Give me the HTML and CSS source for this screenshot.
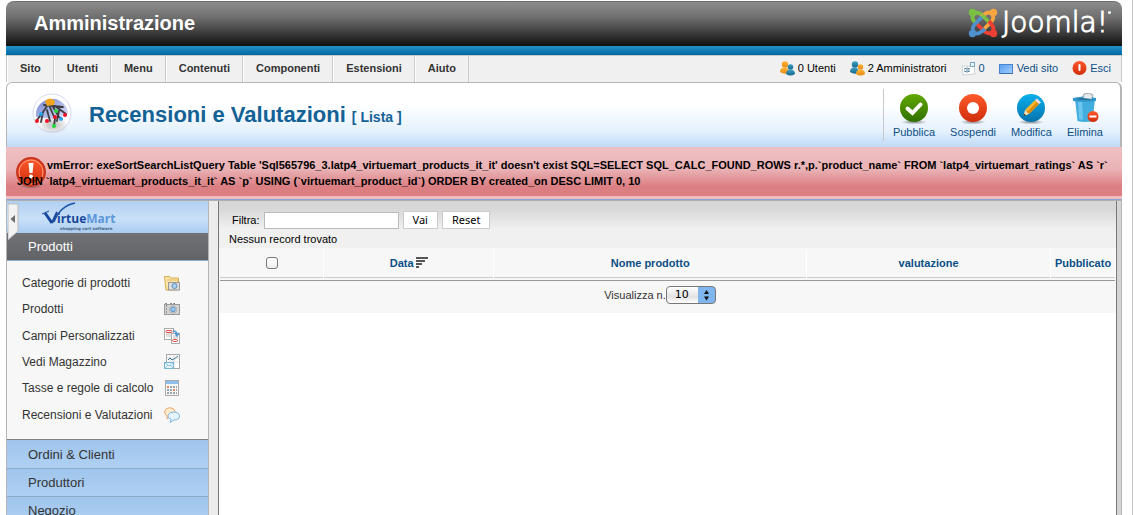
FILE: index.html
```html
<!DOCTYPE html>
<html lang="it">
<head>
<meta charset="utf-8">
<title>Amministrazione - Recensioni e Valutazioni</title>
<link rel="stylesheet" href="styles.css">
</head>
<body>
<svg class="defs" aria-hidden="true">
  <defs>
    <linearGradient id="green" x1="0" y1="0" x2="0" y2="1"><stop offset="0" stop-color="#62a800"/><stop offset="1" stop-color="#2f6f00"/></linearGradient>
    <linearGradient id="red" x1="0" y1="0" x2="0" y2="1"><stop offset="0" stop-color="#ff5a2c"/><stop offset="1" stop-color="#cf2d0c"/></linearGradient>
    <linearGradient id="blue" x1="0" y1="0" x2="0" y2="1"><stop offset="0" stop-color="#08b0ec"/><stop offset="1" stop-color="#0672ae"/></linearGradient>
    <linearGradient id="orange" x1="0" y1="0" x2="0" y2="1"><stop offset="0" stop-color="#ffb53a"/><stop offset="1" stop-color="#e88a10"/></linearGradient>
    <linearGradient id="teal" x1="0" y1="0" x2="0" y2="1"><stop offset="0" stop-color="#3f9fc4"/><stop offset="1" stop-color="#15688f"/></linearGradient>
    <linearGradient id="sky" x1="0" y1="0" x2="1" y2="1"><stop offset="0" stop-color="#5d9ef0"/><stop offset="1" stop-color="#9fd0ff"/></linearGradient>
    <linearGradient id="dome" x1="0" y1="0" x2="1" y2="1"><stop offset="0" stop-color="#6f7fcc"/><stop offset="1" stop-color="#e4e9fa"/></linearGradient>
    <radialGradient id="halo"><stop offset="0.3" stop-color="#555" stop-opacity=".5"/><stop offset="1" stop-color="#555" stop-opacity="0"/></radialGradient>
  </defs>
</svg>
<div class="page">
  <header class="top">
    <h1 class="site-title">Amministrazione</h1>
    <div class="joomla">
      <svg width="30" height="30" viewBox="0 0 30 30" fill="none" stroke-linejoin="round" aria-hidden="true">
        <g stroke-width="3.800">
          <path d="M9 17L6 13Q3 9 6 6Q10 3 14 7L21 14" stroke="#7ac143"/>
          <path d="M9 17L6 13Q3 9 6 6Q10 3 14 7L21 14" stroke="#f9a541" transform="rotate(90 15 15)"/>
          <path d="M9 17L6 13Q3 9 6 6Q10 3 14 7L21 14" stroke="#ee4035" transform="rotate(180 15 15)"/>
          <path d="M9 17L6 13Q3 9 6 6Q10 3 14 7L21 14" stroke="#4f91cd" transform="rotate(270 15 15)"/>
          <path d="M14 7L17 10" stroke="#7ac143"/>
        </g>
        <circle cx="4.500" cy="4.500" r="3.700" fill="#7ac143"/>
        <circle cx="25.500" cy="4.500" r="3.700" fill="#f9a541"/>
        <circle cx="25.500" cy="25.500" r="3.700" fill="#ee4035"/>
        <circle cx="4.500" cy="25.500" r="3.700" fill="#4f91cd"/>
      </svg>
      <span class="wordmark">Joomla!<span class="dot"></span></span>
    </div>
  </header>
  <div class="stripe"></div>

  <div class="bar">
    <nav class="menu">
      <a href="#">Sito</a><a href="#">Utenti</a><a href="#">Menu</a><a href="#">Contenuti</a><a href="#">Componenti</a><a href="#">Estensioni</a><a href="#">Aiuto</a>
    </nav>
    <div class="status">
      <span class="stat">
        <svg width="15" height="15" viewBox="0 0 15 15" aria-hidden="true"><g fill="url(#orange)"><circle cx="5" cy="3.500" r="3.200"/><path d="M0 11 Q0 6 5 6.500 Q9 7 9 12 Q4 14 0 11Z"/></g><g fill="url(#teal)"><circle cx="10.500" cy="6" r="2.800"/><path d="M6 13 Q6 8.500 10.500 8.500 Q15 8.500 15 13 Q10.500 16 6 13Z"/></g></svg>
        0 Utenti</span>
      <span class="stat">
        <svg width="15" height="15" viewBox="0 0 15 15" aria-hidden="true"><g fill="url(#teal)"><circle cx="5" cy="3.500" r="3.200"/><path d="M0 11 Q0 6 5 6.500 Q9 7 9 12 Q4 14 0 11Z"/></g><g fill="url(#orange)"><circle cx="10.500" cy="6" r="2.800"/><path d="M6 13 Q6 8.500 10.500 8.500 Q15 8.500 15 13 Q10.500 16 6 13Z"/></g></svg>
        2 Amministratori</span>
      <a class="stat" href="#">
        <svg width="15" height="15" viewBox="0 0 15 15" aria-hidden="true"><path d="M1 5h9l3 0 1 8-12 1z" fill="#fdfdfd" stroke="#ccd2d6"/><path d="M3 8q3-2 6 0M3 10q3 2 6 0M5 9h3" stroke="#55809f" fill="none"/><rect x="9.500" y="1.500" width="4" height="4" fill="#e8f3fb" stroke="#7ba5c4"/></svg>
        0</a>
      <a class="stat" href="#">
        <svg width="15" height="15" viewBox="0 0 15 15" aria-hidden="true"><rect x=".5" y="3.500" width="13" height="9" fill="url(#sky)" stroke="#4a84cc"/><path d="M1 12.500h13" stroke="#3c6ea8"/></svg>
        Vedi sito</a>
      <a class="stat" href="#">
        <svg width="15" height="15" viewBox="0 0 15 15" aria-hidden="true"><circle cx="7.500" cy="7" r="7" fill="url(#red)"/><rect x="6.500" y="3" width="2" height="7" rx="1" fill="#fff"/></svg>
        Esci</a>
    </div>
  </div>

  <section class="title-panel">
    <svg class="title-icon" width="48" height="48" viewBox="0 0 48 48" aria-hidden="true">
      <circle cx="23" cy="22" r="19" fill="#fff" stroke="#d4daf0" stroke-width="1"/>
      <path d="M7 26A16 16 0 0 1 39 22L28 28Z" fill="url(#dome)"/>
      <ellipse cx="24" cy="34" rx="15" ry="9" fill="url(#halo)" opacity=".6"/>
      <path d="M15 14 34 16M20 12 14 21 12 31M14 21 8 29M18 19 21 30M20 14 26 28 25 35M24 16 30 26 33 28M26 15 37 23M30 20 28 30" fill="none" stroke="#3c3c42" stroke-width="1.800" stroke-linecap="round"/>
      <path d="M16 10q5-5 10 0l-1 4-7 1z" fill="#f2a51c"/>
      <g fill="#f01228"><circle cx="8" cy="30" r="2"/><circle cx="18" cy="30" r="2"/><circle cx="26" cy="26" r="2"/><circle cx="36" cy="24" r="2"/></g>
      <g fill="#24d63a"><circle cx="27" cy="20" r="2"/><circle cx="25" cy="35" r="2"/></g>
      <g fill="#27a5f0"><circle cx="12" cy="23" r="2"/><circle cx="32" cy="28" r="2"/></g>
    </svg>
    <h2 class="title">Recensioni e Valutazioni <small>[ Lista ]</small></h2>
    <div class="toolbar">
      <a href="#">
        <svg width="32" height="32" viewBox="0 0 32 32" aria-hidden="true"><ellipse cx="16" cy="29" rx="13" ry="2.500" fill="url(#halo)"/><circle cx="16" cy="15" r="14" fill="url(#green)"/><path d="M9.500 15.500l5 4.500 8-8.500" fill="none" stroke="#fff" stroke-width="4" stroke-linecap="round"/></svg>
        Pubblica</a>
      <a href="#">
        <svg width="32" height="32" viewBox="0 0 32 32" aria-hidden="true"><ellipse cx="16" cy="29" rx="13" ry="2.500" fill="url(#halo)"/><circle cx="16" cy="15" r="14" fill="url(#red)"/><circle cx="16" cy="15" r="6" fill="#fff"/></svg>
        Sospendi</a>
      <a href="#">
        <svg width="32" height="32" viewBox="0 0 32 32" aria-hidden="true"><ellipse cx="16" cy="29" rx="13" ry="2.500" fill="url(#halo)"/><circle cx="16" cy="15" r="14" fill="url(#blue)"/><path d="M10 17L20 7l4 4-10 10z" fill="#f8b62c"/><path d="M12 19L22 9l2 2-10 10z" fill="#d98a10"/><path d="M20 7l2-1.500 4 4L24 11z" fill="#f3dfe0"/><path d="M10 17l4 4-5.500 2z" fill="#f7dfae"/><path d="M9.200 20.800l1.700 1.500L8.500 23z" fill="#222"/></svg>
        Modifica</a>
      <a href="#">
        <svg width="32" height="32" viewBox="0 0 32 32" aria-hidden="true"><path d="M6 6h20l-2.500 22q-7.500 2-15 0z" fill="#42aee0"/><path d="M9 8h4l1 19-4-1z" fill="#6cc6ee"/><path d="M13 5l2-4 5-1 4 2-1 4z" fill="#dfe3e6" stroke="#9ba5ab"/><path d="M4 5q12-3 23 0v3q-11 2-23 0z" fill="#3298cb"/><path d="M7 6q9-2 18 0-9 2-18 0z" fill="#226b92"/><path d="M14 5l3-3 5 1 1 3z" fill="#e9ecee"/><circle cx="24" cy="23.500" r="5.500" fill="url(#red)"/><rect x="20.500" y="22.500" width="7" height="2" fill="#fff"/></svg>
        Elimina</a>
    </div>
  </section>

  <div class="error" role="alert">
    <svg class="error-icon" width="32" height="34" viewBox="0 0 32 34" aria-hidden="true"><ellipse cx="16" cy="30" rx="12" ry="3" fill="url(#halo)"/><circle cx="16" cy="16" r="14" fill="url(#red)" stroke="#c9361f" stroke-width="2"/><circle cx="16" cy="16" r="12" fill="none" stroke="#ff9c80" stroke-width="1"/><path d="M13.500 7h5l-1 10h-3z" fill="#fff"/><circle cx="16" cy="20.500" r="2" fill="#fff"/></svg>
    <p>vmError: exeSortSearchListQuery Table 'Sql565796_3.latp4_virtuemart_products_it_it' doesn't exist SQL=SELECT SQL_CALC_FOUND_ROWS r.*,p.`product_name` FROM `latp4_virtuemart_ratings` AS `r` JOIN `latp4_virtuemart_products_it_it` AS `p` USING (`virtuemart_product_id`) ORDER BY created_on DESC LIMIT 0, 10</p>
  </div>

  <div class="body">
    <aside class="side">
      <div class="brand">
        <svg width="90" height="30" viewBox="0 0 90 30" role="img" aria-label="VirtueMart">
          <path d="M14 20Q20 4 35 1" fill="none" stroke="#1a55a5" stroke-width="1.500"/>
          <path d="M5 11L12 21" stroke="#17479c" stroke-width="3"/>
          <path d="M2 12L9 9" stroke="#17479c" stroke-width="1"/>
          <path d="M12 21L17 10" stroke="#17479c" stroke-width="2"/>
          <text x="17" y="21" class="vm-name">irtue<tspan class="vm-light">Mart</tspan></text>
          <text x="20" y="28" class="vm-tag">shopping cart software</text>
        </svg>
        <button class="collapse" type="button" aria-label="Chiudi menu">
          <svg width="11" height="38" viewBox="0 0 11 38" aria-hidden="true"><path d="M0 1H10V28L0 37Z" fill="#f2f2f2" stroke="#bbb"/><path d="M7 12L2.500 16L7 20Z" fill="#6c6c6c"/></svg>
        </button>
      </div>
      <h3 class="section open">Prodotti</h3>
      <ul class="links">
        <li><a href="#">Categorie di prodotti <svg width="16" height="16" viewBox="0 0 16 16" aria-hidden="true"><path d="M.5 1.500h5l1 1.500h8v4H13v8H2z" fill="#fbe4a6" stroke="#d9ac52"/><path d="M3 5h11" stroke="#e2b965"/><rect x="4.500" y="7.500" width="11" height="7.500" fill="#ddd" stroke="#999"/><circle cx="10.500" cy="11" r="2.500" fill="#a8d2f8" stroke="#668cb0"/></svg></a></li>
        <li><a href="#">Prodotti <svg width="16" height="16" viewBox="0 0 16 16" aria-hidden="true"><rect x=".5" y="3.500" width="15" height="10" fill="#d5d5d5" stroke="#9a9a9a"/><path d="M1 2.500h3M6 2.500h6M2.500 4v9" stroke="#8d8d8d" stroke-dasharray="2 1"/><circle cx="9" cy="8.500" r="3.700" fill="#eee" stroke="#aaa"/><circle cx="9" cy="8.500" r="2.300" fill="#9bc8f2" stroke="#5d8dc0"/></svg></a></li>
        <li><a href="#">Campi Personalizzati <svg width="16" height="16" viewBox="0 0 16 16" aria-hidden="true"><rect x=".5" y=".5" width="9" height="11" fill="#fff" stroke="#aaa"/><rect x="7.500" y="5.500" width="8" height="10" fill="#fff" stroke="#aaa"/><path d="M2 6h6M2 8h6M9 8h5M9 10h5" stroke="#bbb"/><g fill="#fff" stroke="#e34b4b"><rect x="2" y="2.500" width="6" height="2" rx="1"/><rect x="8.500" y="11.500" width="5" height="2" rx="1"/></g><path d="M9 3q4 0 4 4M11 5l2 3 2-3" fill="none" stroke="#5599cf" stroke-width="1.500"/></svg></a></li>
        <li><a href="#">Vedi Magazzino <svg width="16" height="16" viewBox="0 0 16 16" aria-hidden="true"><rect x="2.500" y=".5" width="13" height="14" fill="#fff" stroke="#aaa"/><path d="M6 1v13M10 1v13M3 4h12M3 8h12" stroke="#ddd"/><path d="M4 6l2-2 2 2 2-1 4-3" fill="none" stroke="#437394"/><rect x=".5" y="8.500" width="9" height="6" fill="#e9f6ff" stroke="#78b5db"/><path d="M1 9l4 3 4-3M1 14l3-3M9 14l-3-3" fill="none" stroke="#8fc5e5"/></svg></a></li>
        <li><a href="#">Tasse e regole di calcolo <svg width="16" height="16" viewBox="0 0 16 16" aria-hidden="true"><rect x="1.500" y=".5" width="13" height="15" fill="#f8f8f8" stroke="#aaa"/><rect x="2" y="1" width="12" height="3" fill="#8fbdec"/><path d="M3 7h10M3 10h10M3 13h10" stroke="#9aa4ad" stroke-width="2" stroke-dasharray="2 1"/><path d="M3 7h2M9 10h2" stroke="#e98859" stroke-width="2"/></svg></a></li>
        <li><a href="#">Recensioni e Valutazioni <svg width="16" height="16" viewBox="0 0 16 16" aria-hidden="true"><path d="M3 12l0-3Q0 7 .8 4Q2 .6 6 .7Q10.500 1 11 4.500Q11 9 5.500 9.500Z" fill="#ffeccb" stroke="#eaa56e"/><path d="M6 15.500l1-3Q3 11 4 8Q5.500 5 9.500 5Q15 5 15.500 9Q15.500 13 10 13Z" fill="#e4f3ff" stroke="#7eb4dd"/></svg></a></li>
      </ul>
      <h3 class="section first">Ordini &amp; Clienti</h3>
      <h3 class="section">Produttori</h3>
      <h3 class="section">Negozio</h3>
    </aside>
    <main class="content">
      <form class="filter">
        <label for="filter">Filtra:</label>
        <input id="filter" type="text">
        <button type="button">Vai</button>
        <button type="button">Reset</button>
      </form>
      <p class="empty">Nessun record trovato</p>
      <table class="list">
        <thead>
          <tr>
            <th class="c-check"><input type="checkbox" aria-label="Seleziona tutto"></th>
            <th class="c-date"><a href="#">Data<svg width="12" height="11" viewBox="0 0 12 11" aria-hidden="true"><path d="M0 1h12M0 4h9M0 7h6M0 10h3" stroke="#555" stroke-width="2"/></svg></a></th>
            <th class="c-name"><a href="#">Nome prodotto</a></th>
            <th class="c-rate"><a href="#">valutazione</a></th>
            <th class="c-pub"><a href="#">Pubblicato</a></th>
          </tr>
        </thead>
        <tfoot>
          <tr>
            <td colspan="5">
              <div class="pager">
                <label for="limit">Visualizza n.</label>
                <span class="select">
                  <select id="limit"><option>10</option><option>20</option></select>
                  <svg width="17" height="16" viewBox="0 0 17 16" aria-hidden="true"><path d="M8.500 3L11 7H6ZM6 9.500H11L8.500 13.500Z" fill="#111"/></svg>
                </span>
              </div>
            </td>
          </tr>
        </tfoot>
      </table>
    </main>
  </div>
</div>
</body>
</html>
```
FILE: styles.css
```css
* { box-sizing: border-box; }

body {
  margin: 0;
  padding: 1px 10px 0 6px;
  height: 100vh;
  overflow: hidden;
  border-right: 1px solid #c4c4c4;
  background: #fff;
  color: #000;
  font: 11px/16px "Liberation Sans", Arial, sans-serif;
}

h1, h2, h3, p, ul { margin: 0; padding: 0; }
ul { list-style: none; }
a { color: #0b4f86; text-decoration: none; }
svg { display: block; flex: none; }
.defs { position: absolute; width: 0; height: 0; }

.page {
  display: flex;
  flex-direction: column;
  height: 100%;
}

/* Header */
.top {
  display: flex;
  align-items: center;
  justify-content: space-between;
  flex: none;
  height: 45px;
  padding: 0 11px 2px 28px;
  border-top: 1px solid #6d6d6d;
  border-radius: 8px 8px 0 0;
  background: linear-gradient(#8c8c8c, #6f6f6f 35%, #101010);
}
.site-title {
  color: #fff;
  font-size: 20px;
  line-height: 24px;
}
.joomla { display: flex; align-items: center; gap: 4px; }
.wordmark {
  display: flex;
  color: #fff;
  font: 200 28px/32px "DejaVu Sans", sans-serif;
  -webkit-text-stroke: 1px #fff;
}
.dot {
  width: 3px;
  height: 3px;
  margin-top: 4px;
  border-radius: 50%;
  background: #fff;
}
.stripe {
  flex: none;
  height: 9px;
  background: linear-gradient(#2590c9, #0069a3);
}

/* Menu bar */
.bar {
  display: flex;
  justify-content: space-between;
  flex: none;
  height: 27px;
  border: solid #c8c8c8;
  border-width: 1px 1px 0;
  background: #f0f0f0;
}
.menu { display: flex; }
.menu a {
  padding: 4px 12px 0 13px;
  border-right: 1px solid #ccc;
  box-shadow: inset 1px 0 #fff;
  color: #333;
  font-weight: bold;
}
.status {
  display: flex;
  align-items: center;
  gap: 14px;
  padding: 0 10px 2px 0;
}
.stat { display: flex; align-items: center; gap: 3px; }

/* Title and toolbar */
.title-panel {
  display: flex;
  align-items: center;
  flex: none;
  height: 65px;
  padding: 0 17px 0 22px;
  border: solid #b5b5b5;
  border-width: 1px 2px 0 1px;
  border-radius: 6px 6px 0 0;
  background: linear-gradient(#fff 35%, #e5f1fd 75%, #bfdaf7);
}
.title {
  flex: 1;
  padding: 2px 0 0 12px;
  color: #146295;
  font-size: 22px;
  line-height: 28px;
}
.title small { font-size: 14px; }
.toolbar {
  display: flex;
  gap: 15px;
  padding-left: 9px;
  border-left: 1px solid #c5c9cd;
}
.toolbar a {
  display: flex;
  flex-direction: column;
  align-items: center;
  height: 52px;
  padding-top: 4px;
  line-height: 14px;
}

/* Error message */
.error {
  display: flex;
  position: relative;
  flex: none;
  padding: 10px 8px 7px 11px;
  border-bottom: 3px solid #f0bcc0;
  background: linear-gradient(#efc0c3, #eab3b6 45%, #db7f83 80%);
  font-weight: bold;
}
.error p { position: relative; text-indent: 30px; }
.error-icon { position: absolute; left: 9px; top: 9px; }

/* Columns */
.body {
  display: flex;
  flex: 1;
  min-height: 0;
  border: solid #b5b5b5;
  border-width: 1px 1px 0;
  border-top-color: #84a7de;
  box-shadow: inset 0 1px #b0b0b0;
}
.side {
  flex: none;
  width: 202px;
  margin-top: 1px;
  border-right: 1px solid #b5b5b5;
  background: #f7f7f7;
}
.brand {
  position: relative;
  height: 32px;
  padding: 1px 0 0 33px;
  background: linear-gradient(#b2d0f1, #c9e0f8 55%, #aacdf1);
}
.collapse {
  position: absolute;
  left: 1px;
  top: 2px;
  padding: 0;
  border: 0;
  background: none;
}
.vm-name { fill: #17479c; font: bold 12px "Open Sans", sans-serif; }
.vm-light { fill: #5b97d8; }
.vm-tag { fill: #47637f; font: bold 4px "DejaVu Sans", sans-serif; }

.section {
  height: 28px;
  padding-left: 21px;
  border-bottom: 1px solid #8cabc8;
  background: linear-gradient(#a0c5ec, #aed0f3);
  color: #333;
  font-size: 13px;
  font-weight: normal;
  line-height: 27px;
}
.section.open {
  border-bottom-color: #88aac9;
  background: linear-gradient(#717276, #626367);
  color: #fff;
}
.section.first {
  height: 30px;
  border-top: 1px solid #828282;
  line-height: 29px;
}
.links {
  display: grid;
  grid-auto-rows: 1fr;
  height: 178px;
  padding: 9px 28px 11px 15px;
}
.links a {
  display: flex;
  align-items: center;
  justify-content: space-between;
  height: 100%;
  color: #333;
  font-size: 12px;
  white-space: nowrap;
}

/* Content */
.content {
  flex: 1;
  margin: 1px 4px 0 9px;
  border: solid #777;
  border-width: 0 1px 0 1px;
  box-shadow: -9px 0 #ececec, 4px 0 #d4d4d4;
  background: linear-gradient(#d6d6d6, #d8d8d8 8px, #f0f0f0 28px, #f0f0f0 60px, #fff 60px);
}
.filter {
  display: flex;
  align-items: center;
  gap: 4px;
  padding: 10px 0 0 13px;
}
.filter input {
  width: 135px;
  height: 17px;
  border: 1px solid #bbb;
  background: #fff;
}
.filter button {
  height: 18px;
  padding: 0 9px;
  border: 1px solid #ccc;
  background: #fff;
  color: #000;
  font: 11px/14px "Noto Sans", sans-serif;
}
.empty { padding: 2px 10px 1px; }

.list {
  width: 100%;
  border-spacing: 1px 2px;
  table-layout: fixed;
  background: #f7f7f7;
}
.list th {
  height: 28px;
  padding: 0 0 2px;
  border-bottom: 1px solid #ccc;
  box-shadow: 1px 0 #fff;
}
.list th a { display: flex; align-items: center; justify-content: center; gap: 2px; }
.list th input {
  appearance: none;
  display: block;
  width: 12px;
  height: 12px;
  margin: 0 auto;
  border: 1px solid #777;
  border-radius: 3px;
  background: linear-gradient(#fff, #eee);
}
.c-check { width: 103px; }
.c-date { width: 19%; }
.c-name { width: 35%; }
.c-pub { width: 64px; }
.list td { height: 31px; padding: 0 0 2px; border-top: 1px solid #999; }
.pager {
  display: flex;
  align-items: center;
  justify-content: center;
  padding-right: 15px;
  color: #333;
}
.select { display: flex; position: relative; }
.select select {
  appearance: none;
  width: 50px;
  height: 18px;
  padding: 0 8px;
  border: 1px solid #777;
  border-radius: 4px;
  background: linear-gradient(90deg, transparent 31px, #7fb6ee 31px), linear-gradient(#fff, #e2e2e2 60%, #fff);
  color: #000;
  font: 11px/16px "DejaVu Sans", sans-serif;
}
.select svg { position: absolute; right: 1px; top: 1px; pointer-events: none; }
```
